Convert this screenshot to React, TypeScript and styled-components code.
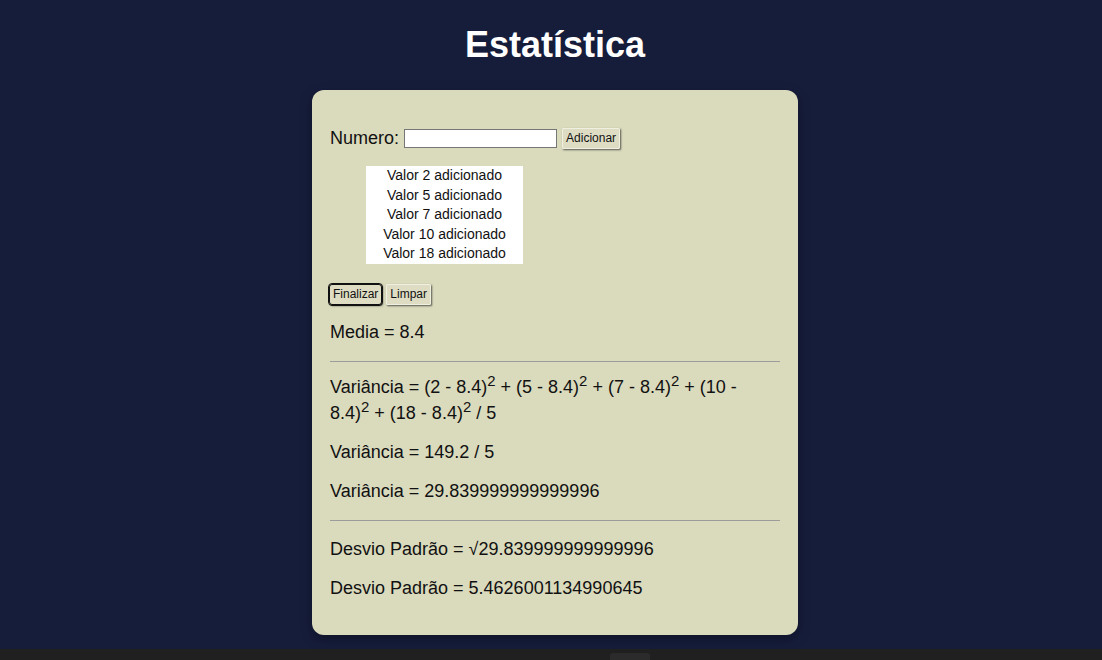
import React from "react";
import styled, { createGlobalStyle } from "styled-components";

const Global = createGlobalStyle`
  html, body { margin: 0; padding: 0; }
  body {
    background: #161d3b;
    font-family: "Liberation Sans", Arial, sans-serif;
    height: 660px;
    overflow: hidden;
  }
`;

const Page = styled.div`
  display: flex;
  flex-direction: column;
  height: 660px;
`;

const Main = styled.main`
  flex: 1;
  display: flex;
  flex-direction: column;
  align-items: center;
  padding-left: 8px;
`;

const Title = styled.h1`
  color: #ffffff;
  font-size: 36px;
  font-weight: bold;
  margin: 24px 0 25px;
  line-height: 41px;
`;

const Card = styled.section`
  width: 486px;
  box-sizing: border-box;
  background: #dadabd;
  border-radius: 12px;
  padding: 18px 18px;
  color: #111;
  font-size: 18px;
  box-shadow: 0 4px 12px rgba(0, 0, 0, 0.35);
`;

const Para = styled.p<{ $top?: number; $bottom?: number }>`
  margin: ${(p) => p.$top ?? 18}px 0 ${(p) => p.$bottom ?? 18}px;
  line-height: 21px;
`;

const Formula = styled.p`
  margin: 12px 0 16px;
  padding-right: 8px;
  line-height: 26px;
`;

const InputRow = styled.div`
  display: flex;
  align-items: center;
  margin: 19px 0 17px;
  height: 22px;
`;

const Label = styled.label`
  margin-right: 5px;
`;

const TextInput = styled.input`
  width: 153px;
  height: 19px;
  box-sizing: border-box;
  border: 1px solid #767676;
  background: #fff;
  margin: 0 5px 0 0;
  padding: 1px 2px;
`;

const Btn = styled.button<{ $focused?: boolean }>`
  font-family: "Liberation Sans", Arial, sans-serif;
  font-size: 12px;
  color: #111;
  background: #deddc4;
  border: 1px solid ${(p) => (p.$focused ? "#111" : "#f0f0e0")};
  outline: ${(p) => (p.$focused ? "1px solid #111" : "none")};
  border-radius: ${(p) => (p.$focused ? "3px" : "1px")};
  box-shadow: 1px 1px 2px rgba(0, 0, 0, 0.6);
  height: 21px;
  padding: 0 3px;
  line-height: 17px;
  cursor: pointer;
`;

const List = styled.ul`
  list-style: none;
  margin: 0 0 0 36px;
  padding: 0;
  width: 157px;
  background: #ffffff;
  font-size: 14px;
  line-height: 19.6px;
  text-align: center;
`;

const ButtonRow = styled.div`
  display: flex;
  gap: 4px;
  margin: 20px 0 0 -1px;
`;

const Rule = styled.hr`
  border: none;
  border-top: 1px solid #9c9c9c;
  margin: 0;
`;

const Sup = styled.sup`
  font-size: 0.83em;
  line-height: 1;
  vertical-align: 7px;
`;

const Footer = styled.div`
  height: 11px;
  background: #202020;
  display: flex;
  justify-content: center;
  align-items: flex-end;
  padding-left: 158px;
`;

const FooterTab = styled.div`
  width: 40px;
  height: 7px;
  background: #2b2b2b;
  border-radius: 3px 3px 0 0;
`;

const values = [2, 5, 7, 10, 18];

export default function App() {
  return (
    <Page>
      <Global />
      <Main>
        <Title>Estatística</Title>
        <Card>
          <InputRow>
            <Label>Numero:</Label>
            <TextInput type="text" />
            <Btn>Adicionar</Btn>
          </InputRow>
          <List>
            {values.map((v) => (
              <li key={v}>Valor {v} adicionado</li>
            ))}
          </List>
          <ButtonRow>
            <Btn $focused>Finalizar</Btn>
            <Btn>Limpar</Btn>
          </ButtonRow>
          <Para $top={17}>Media = 8.4</Para>
          <Rule />
          <Formula>
            Variância = (2 - 8.4)<Sup>2</Sup> + (5 - 8.4)<Sup>2</Sup> + (7 - 8.4)
            <Sup>2</Sup> + (10 - 8.4)<Sup>2</Sup> + (18 - 8.4)<Sup>2</Sup> / 5
          </Formula>
          <Para $top={16}>Variância = 149.2 / 5</Para>
          <Para>Variância = 29.839999999999996</Para>
          <Rule />
          <Para>Desvio Padrão = √29.839999999999996</Para>
          <Para>Desvio Padrão = 5.4626001134990645</Para>
        </Card>
      </Main>
      <Footer>
        <FooterTab />
      </Footer>
    </Page>
  );
}
